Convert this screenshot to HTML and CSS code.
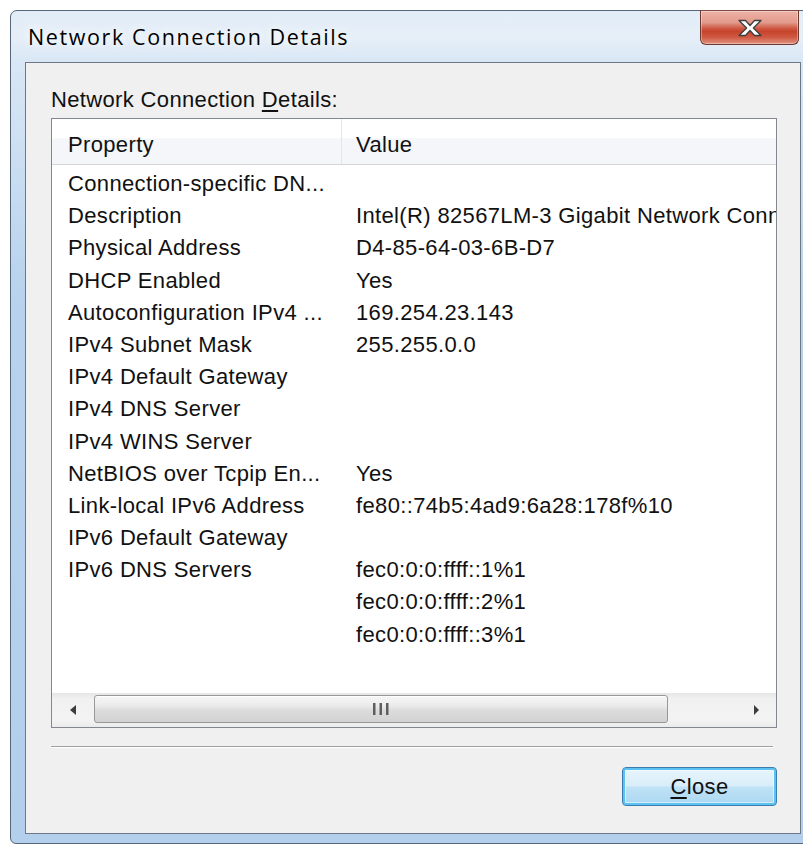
FILE: index.html
```html
<!DOCTYPE html>
<html lang="en">
<head>
<meta charset="utf-8">
<title>Network Connection Details</title>
<link rel="stylesheet" href="styles.css">
</head>
<body>
<div class="window">
  <div class="titlebar"><span class="title">Network Connection Details</span></div>
  <button class="caption-close" aria-label="Close">
    <svg width="30" height="20" viewBox="0 0 30 20">
      <path d="M4 2.5 H10.5 L15 7.5 L19.5 2.5 H26 L18.4 10 L26 17.5 H19.5 L15 12.5 L10.5 17.5 H4 L11.6 10 Z" fill="#ffffff" stroke="#3e3e3e" stroke-width="1.3" stroke-linejoin="round"/>
    </svg>
  </button>
  <div class="client">
    <div class="label">Network Connection <u>D</u>etails:</div>
    <div class="listview">
      <div class="lv-header">
        <div class="hcell hcell-prop">Property</div>
        <div class="hcell hcell-val">Value</div>
      </div>
      <div class="lv-body">
        <div class="row"><span class="cell prop">Connection-specific DN...</span><span class="cell val"></span></div>
        <div class="row"><span class="cell prop">Description</span><span class="cell val">Intel(R) 82567LM-3 Gigabit Network Connection</span></div>
        <div class="row"><span class="cell prop">Physical Address</span><span class="cell val">D4-85-64-03-6B-D7</span></div>
        <div class="row"><span class="cell prop">DHCP Enabled</span><span class="cell val">Yes</span></div>
        <div class="row"><span class="cell prop">Autoconfiguration IPv4 ...</span><span class="cell val">169.254.23.143</span></div>
        <div class="row"><span class="cell prop">IPv4 Subnet Mask</span><span class="cell val">255.255.0.0</span></div>
        <div class="row"><span class="cell prop">IPv4 Default Gateway</span><span class="cell val"></span></div>
        <div class="row"><span class="cell prop">IPv4 DNS Server</span><span class="cell val"></span></div>
        <div class="row"><span class="cell prop">IPv4 WINS Server</span><span class="cell val"></span></div>
        <div class="row"><span class="cell prop">NetBIOS over Tcpip En...</span><span class="cell val">Yes</span></div>
        <div class="row"><span class="cell prop">Link-local IPv6 Address</span><span class="cell val">fe80::74b5:4ad9:6a28:178f%10</span></div>
        <div class="row"><span class="cell prop">IPv6 Default Gateway</span><span class="cell val"></span></div>
        <div class="row"><span class="cell prop">IPv6 DNS Servers</span><span class="cell val">fec0:0:0:ffff::1%1</span></div>
        <div class="row"><span class="cell prop"></span><span class="cell val">fec0:0:0:ffff::2%1</span></div>
        <div class="row"><span class="cell prop"></span><span class="cell val">fec0:0:0:ffff::3%1</span></div>
      </div>
      <div class="hscroll">
        <div class="sb-btn">
          <svg width="10" height="12" viewBox="0 0 10 12"><path d="M8 1 L2 6 L8 11 Z" fill="#3c3c3c"/></svg>
        </div>
        <div class="sb-track">
          <div class="sb-thumb">
            <svg width="18" height="14" viewBox="0 0 18 14">
              <rect x="1" y="1" width="2.5" height="12" fill="#5e5e5e"/>
              <rect x="7.5" y="1" width="2.5" height="12" fill="#5e5e5e"/>
              <rect x="14" y="1" width="2.5" height="12" fill="#5e5e5e"/>
            </svg>
          </div>
        </div>
        <div class="sb-btn">
          <svg width="10" height="12" viewBox="0 0 10 12"><path d="M3 1 L8 6 L3 11 Z" fill="#3c3c3c"/></svg>
        </div>
      </div>
    </div>
    <div class="separator"></div>
    <div class="buttons">
      <button class="btn btn-default"><u>C</u>lose</button>
    </div>
  </div>
</div>
</body>
</html>
```

FILE: styles.css
```css
html, body {
  margin: 0;
  height: 100%;
}

body {
  background: #ffffff;
  overflow: hidden;
  font-family: "Liberation Sans", Arial, sans-serif;
  color: #111111;
}

/* Aero window frame */
.window {
  position: relative;
  box-sizing: border-box;
  margin: 10px 0 0 10px;
  width: 805px;
  height: 834px;
  border: 1px solid #55657a;
  border-radius: 7px 7px 6px 6px;
  padding: 0 13px 9px 14px;
  display: flex;
  flex-direction: column;
  background:
    linear-gradient(to bottom, rgba(255,255,255,0.35) 0, rgba(255,255,255,0) 260px),
    linear-gradient(to bottom, #d3e3f3 0, #dbe8f5 25px, #c9ddf1 52px, #b8d2ed 300px, #b3cfec 100%);
}

.titlebar {
  height: 51px;
  display: flex;
  align-items: center;
  padding-left: 3px;
}

.title {
  font-family: "Open Sans", "Noto Sans", sans-serif;
  font-size: 21.5px;
  letter-spacing: 1.6px;
  color: #000000;
  text-shadow: 0 0 8px rgba(255,255,255,0.95), 0 0 14px rgba(255,255,255,0.8);
}

/* red caption close button */
.caption-close {
  position: absolute;
  left: 689px;
  top: -1px;
  width: 99px;
  height: 35px;
  padding: 0;
  border: 1px solid #6b3a33;
  border-top-color: #7a4a44;
  border-radius: 0 0 6px 6px;
  background: linear-gradient(to bottom, #eeb2a6 0%, #e29a8b 35%, #cf5b45 52%, #c7432c 62%, #cf5a43 80%, #e29380 100%);
  box-shadow: inset 0 0 0 1px rgba(255,255,255,0.35);
  display: flex;
  align-items: center;
  justify-content: center;
}

/* dialog client area */
.client {
  flex: 1;
  background: #f0f0f0;
  border: 1px solid #6c7886;
  display: flex;
  flex-direction: column;
  padding: 24px 23px 0 25px;
  font-size: 22px;
  letter-spacing: 0.35px;
}

.label {
  line-height: 26px;
  height: 26px;
}

.label u {
  text-underline-offset: 3px;
}

.listview {
  margin-top: 5px;
  box-sizing: border-box;
  height: 610px;
  border: 1px solid #828790;
  background: #ffffff;
  display: flex;
  flex-direction: column;
  overflow: hidden;
}

.lv-header {
  height: 45px;
  flex: none;
  display: flex;
  border-bottom: 1px solid #d5d5d5;
  background: linear-gradient(to bottom, #ffffff 0, #ffffff 42%, #f4f6f9 44%, #f4f6f9 100%);
}

.hcell {
  display: flex;
  align-items: center;
  white-space: nowrap;
  padding-top: 6px;
}

.hcell-prop {
  width: 273px;
  padding-left: 16px;
  border-right: 1px solid #e2e5ea;
}

.hcell-val {
  padding-left: 14px;
}

.lv-body {
  flex: 1;
  padding-top: 3px;
  overflow: hidden;
}

.row {
  display: flex;
  height: 32.2px;
  line-height: 32.2px;
  white-space: nowrap;
}

.cell {
  overflow: hidden;
}

.cell.prop {
  flex: none;
  width: 274px;
  padding-left: 16px;
}

.cell.val {
  flex: 1;
  padding-left: 14px;
}

/* horizontal scroll bar */
.hscroll {
  flex: none;
  height: 34px;
  display: flex;
  background: linear-gradient(to bottom, #e6e6e6 0, #f1f1f1 18%, #f3f3f3 80%, #ebebeb 100%);
}

.sb-btn {
  width: 41px;
  flex: none;
  display: flex;
  align-items: center;
  justify-content: center;
}

.sb-track {
  flex: 1;
  padding: 2px 0 4px 1px;
  display: flex;
}

.sb-thumb {
  box-sizing: border-box;
  width: 574px;
  border: 1px solid #989898;
  border-radius: 3px;
  background: linear-gradient(to bottom, #f6f6f6 0, #ececec 35%, #dcdcdc 55%, #d2d2d2 100%);
  box-shadow: inset 0 1px 0 #ffffff;
  display: flex;
  align-items: center;
  justify-content: center;
}

.separator {
  margin-top: 18px;
  margin-right: 4px;
  height: 1px;
  background: #a0a0a0;
  border-bottom: 1px solid #ffffff;
}

.buttons {
  margin-top: 19px;
  display: flex;
  justify-content: flex-end;
}

.btn {
  width: 155px;
  height: 39px;
  font-family: "Liberation Sans", Arial, sans-serif;
  font-size: 22px;
  letter-spacing: 0.35px;
  color: #111111;
  border: 1px solid #3a7bb0;
  border-radius: 4px;
  background: linear-gradient(to bottom, #e8f5fc 0, #d9eefa 48%, #bfe2f6 52%, #abd7f1 100%);
  box-shadow: inset 0 0 0 2px #5cc2f0, inset 0 0 0 3px rgba(255,255,255,0.5);
  padding: 0;
}

.btn u {
  text-underline-offset: 3px;
}
```
